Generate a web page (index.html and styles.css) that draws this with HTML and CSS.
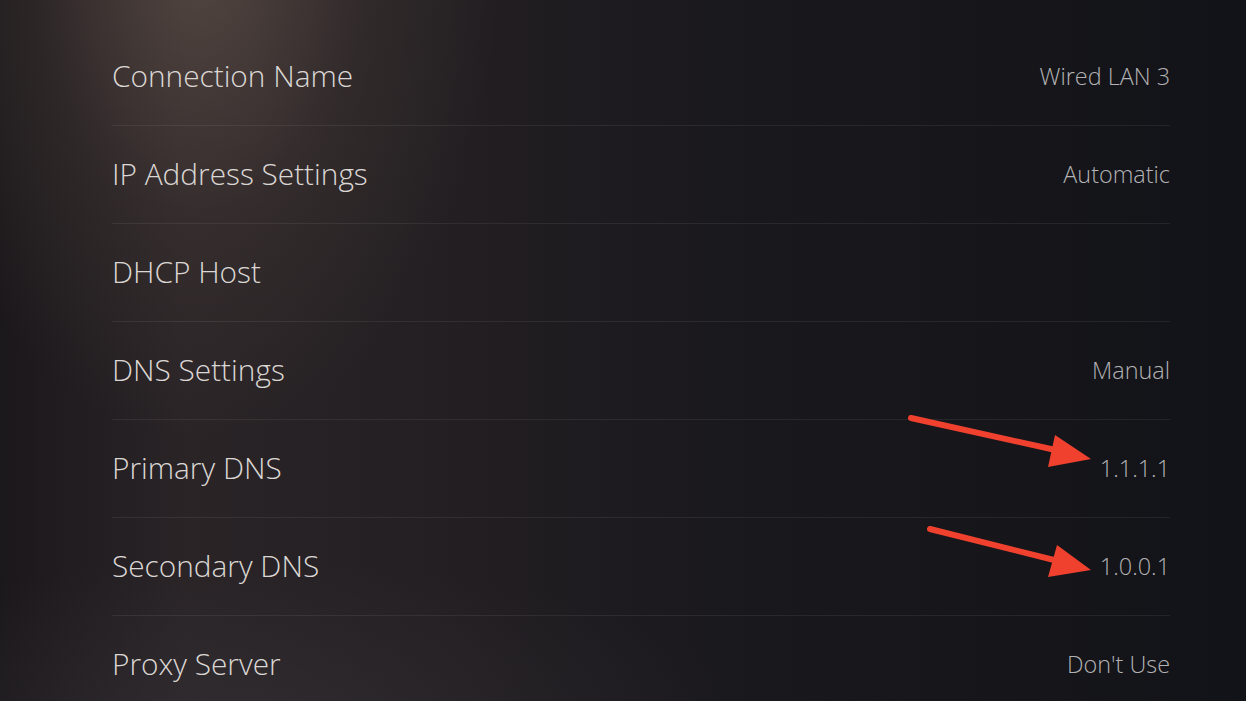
FILE: index.html
```html
<!DOCTYPE html>
<html lang="en">
<head>
  <meta charset="UTF-8" />
  <meta name="viewport" content="width=device-width, initial-scale=1.0"/>
  <title>Connection Settings</title>
  <link rel="stylesheet" href="styles.css">
</head>
<body>
  <div class="screen">
    <ul class="settings">
      <li class="row"><span class="label">Connection Name</span><span class="value">Wired LAN 3</span></li>
      <li class="row"><span class="label">IP Address Settings</span><span class="value">Automatic</span></li>
      <li class="row"><span class="label">DHCP Host</span><span class="value"></span></li>
      <li class="row"><span class="label">DNS Settings</span><span class="value">Manual</span></li>
      <li class="row"><span class="label">Primary DNS</span><span class="value">1.1.1.1</span></li>
      <li class="row"><span class="label">Secondary DNS</span><span class="value">1.0.0.1</span></li>
      <li class="row"><span class="label">Proxy Server</span><span class="value">Don't Use</span></li>
    </ul>

    <!-- annotation arrows drawn over the screenshot -->
    <svg class="arrows" width="1246" height="701" viewBox="0 0 1246 701">
      <line x1="911" y1="418" x2="1060" y2="451" stroke="#f0412f" stroke-width="6" stroke-linecap="round"/>
      <polygon points="1091,459 1055,435 1048,467" fill="#f0412f"/>
      <line x1="930" y1="529" x2="1062" y2="562" stroke="#f0412f" stroke-width="6" stroke-linecap="round"/>
      <polygon points="1091,570 1057,545 1048,577" fill="#f0412f"/>
    </svg>
  </div>
</body>
</html>
```

FILE: styles.css
```css
html, body { margin: 0; padding: 0; }
body {
  width: 1246px;
  height: 701px;
  overflow: hidden;
  font-family: "Open Sans", "Noto Sans", sans-serif;
  background: #15161b;
}
.screen {
  position: relative;
  width: 1246px;
  height: 701px;
  background:
    radial-gradient(ellipse 300px 480px at 200px -40px, rgba(100, 84, 76, 0.7) 0%, rgba(72, 60, 56, 0.35) 55%, rgba(40, 34, 36, 0) 100%),
    radial-gradient(ellipse 500px 160px at 250px 720px, rgba(60, 58, 62, 0.35) 0%, rgba(40, 38, 42, 0) 100%),
    linear-gradient(to right, #1b181b 0%, #2a2427 15%, #231f22 35%, #19181d 60%, #121318 100%);
}
.settings {
  list-style: none;
  margin: 0;
  padding: 28px 76px 0 112px;
}
.row {
  display: flex;
  align-items: center;
  justify-content: space-between;
  height: 97px;
  border-bottom: 1px solid rgba(255, 255, 255, 0.07);
}
.row:last-child { border-bottom: none; }
.label {
  font-size: 29.8px;
  font-weight: 300;
  color: #dbd7d4;
  margin-top: -2px;
}
.value {
  font-size: 23.4px;
  font-weight: 300;
  color: #b3b2b4;
  margin-top: -1px;
}
.arrows {
  position: absolute;
  left: 0;
  top: 0;
}
```
